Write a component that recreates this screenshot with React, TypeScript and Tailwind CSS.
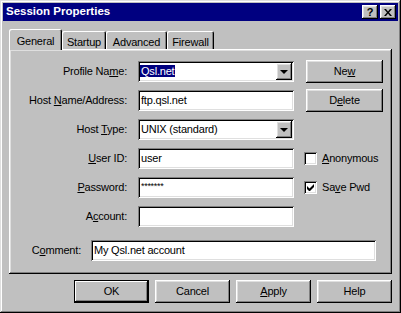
const raised =
  "shadow-[inset_-1px_-1px_#000,inset_1px_1px_#fff,inset_-2px_-2px_#808080,inset_2px_2px_#dfdfdf]";
const sunken =
  "shadow-[inset_1px_1px_#808080,inset_-1px_-1px_#fff,inset_2px_2px_#000,inset_-2px_-2px_#dfdfdf]";

function U({ children }: { children: string }) {
  return <span className="underline underline-offset-[1px]">{children}</span>;
}

function Field({ children, w = "w-[156px]", combo = false }: { children?: React.ReactNode; w?: string; combo?: boolean }) {
  return (
    <div className={`${w} h-[21px] bg-white ${sunken} flex items-center pl-[3px] pr-[2px] relative`}>
      <div className="flex-1 leading-none whitespace-nowrap">{children}</div>
      {combo && (
        <div className={`w-[16px] h-[17px] bg-[#c0c0c0] ${raised} flex items-center justify-center`}>
          <div className="w-0 h-0 border-l-[4px] border-r-[4px] border-t-[4px] border-l-transparent border-r-transparent border-t-black" />
        </div>
      )}
    </div>
  );
}

function Btn({ children, w = "w-[75px]", def = false }: { children: React.ReactNode; w?: string; def?: boolean }) {
  return (
    <div
      className={`${w} h-[23px] flex items-center justify-center bg-[#c0c0c0] ${
        def
          ? "shadow-[inset_0_0_0_1px_#000,inset_-2px_-2px_#000,inset_2px_2px_#fff,inset_-3px_-3px_#808080]"
          : raised
      }`}
    >
      {children}
    </div>
  );
}

function Check({ checked }: { checked?: boolean }) {
  return (
    <div className={`w-[13px] h-[13px] bg-white ${sunken} flex items-center justify-center`}>
      {checked && (
        <svg width="7" height="7" viewBox="0 0 7 7">
          <path d="M0 2v3l2 2h1l4-4V0L2.5 4.5z" fill="#000" />
        </svg>
      )}
    </div>
  );
}

function Row({ label, children, right }: { label: React.ReactNode; children: React.ReactNode; right?: React.ReactNode }) {
  return (
    <div className="flex items-center h-[21px]">
      <div className="w-[118px] text-right whitespace-nowrap">{label}</div>
      <div className="ml-[11px]">{children}</div>
      <div className="ml-[10px] flex items-center">{right}</div>
    </div>
  );
}

export default function App() {
  const tabs = [
    { name: "General", w: "w-[53px]" },
    { name: "Startup", w: "w-[44px]" },
    { name: "Advanced", w: "w-[61px]" },
    { name: "Firewall", w: "w-[47px]" },
  ];
  return (
    <div
      className={`w-[401px] h-[313px] bg-[#c0c0c0] p-[3px] text-[11px] tracking-[-0.2px] text-black font-['Liberation_Sans',Arial,sans-serif] shadow-[inset_-1px_-1px_#000,inset_1px_1px_#dfdfdf,inset_-2px_-2px_#808080,inset_2px_2px_#fff]`}
    >
      {/* title bar */}
      <div className="h-[18px] bg-[#000080] flex items-center pl-[3px] pr-[2px]">
        <div className="flex-1 text-white font-bold text-[11.5px] tracking-normal leading-none">Session Properties</div>
        <div className={`w-[16px] h-[14px] ${raised} bg-[#c0c0c0] flex items-center justify-center font-bold text-[11px] leading-none`}>
          ?
        </div>
        <div className={`ml-[2px] w-[16px] h-[14px] ${raised} bg-[#c0c0c0] flex items-center justify-center`}>
          <svg width="8" height="7" viewBox="0 0 8 7">
            <path d="M0 0h2l2 2.5L6 0h2L5 3.5 8 7H6L4 4.5 2 7H0l3-3.5z" fill="#000" />
          </svg>
        </div>
      </div>

      <div className="px-[6px] pt-[8px]">
        {/* tabs */}
        <div className="flex items-end h-[20px]">
          {tabs.map((t, i) =>
            i === 0 ? (
              <div
                key={t.name}
                className={`${t.w} h-[21px] -mb-px relative z-10 bg-[#c0c0c0] rounded-t-[2px] shadow-[inset_1px_1px_#fff,inset_-1px_0_#000,inset_-2px_0_#808080] flex items-start justify-center pt-[4px]`}
              >
                {t.name}
              </div>
            ) : (
              <div
                key={t.name}
                className={`${t.w} h-[18px] bg-[#c0c0c0] rounded-t-[2px] shadow-[inset_1px_1px_#fff,inset_-1px_0_#000,inset_-2px_0_#808080] flex items-start justify-center pt-[3px]`}
              >
                {t.name}
              </div>
            )
          )}
        </div>

        {/* panel */}
        <div className={`h-[225px] ${raised} pt-[12px]`}>
          <div className="flex flex-col gap-[8px]">
            <Row
              label={<>Profile Na<U>m</U>e:</>}
              right={
                <div className="ml-[2px]">
                  <Btn w="w-[77px]">
                    Ne<U>w</U>
                  </Btn>
                </div>
              }
            >
              <Field combo>
                <span className="bg-[#000080] text-white px-px -ml-px">Qsl.net</span>
              </Field>
            </Row>
            <Row
              label={<>Host <U>N</U>ame/Address:</>}
              right={
                <div className="ml-[2px]">
                  <Btn w="w-[77px]">
                    D<U>e</U>lete
                  </Btn>
                </div>
              }
            >
              <Field>ftp.qsl.net</Field>
            </Row>
            <Row label={<>Host <U>T</U>ype:</>}>
              <Field combo>UNIX (standard)</Field>
            </Row>
            <Row
              label={<><U>U</U>ser ID:</>}
              right={
                <div className="flex items-center gap-[5px]">
                  <Check />
                  <span>
                    <U>A</U>nonymous
                  </span>
                </div>
              }
            >
              <Field>user</Field>
            </Row>
            <Row
              label={<><U>P</U>assword:</>}
              right={
                <div className="flex items-center gap-[5px]">
                  <Check checked />
                  <span>
                    Sa<U>v</U>e Pwd
                  </span>
                </div>
              }
            >
              <Field>
                <span className="text-[9px] tracking-[-0.3px] relative -top-[2px]">*******</span>
              </Field>
            </Row>
            <Row label={<>A<U>c</U>count:</>}>
              <Field />
            </Row>
          </div>
          <div className="flex items-center h-[21px] mt-[13px]">
            <div className="w-[72px] text-right">
              C<U>o</U>mment:
            </div>
            <div className="ml-[10px]">
              <Field w="w-[285px]">My Qsl.net account</Field>
            </div>
          </div>
        </div>

        {/* bottom buttons */}
        <div className="flex justify-end gap-[6px] mt-[6px]">
          <Btn def>OK</Btn>
          <Btn>Cancel</Btn>
          <Btn>
            <U>A</U>pply
          </Btn>
          <Btn>Help</Btn>
        </div>
      </div>
    </div>
  );
}
